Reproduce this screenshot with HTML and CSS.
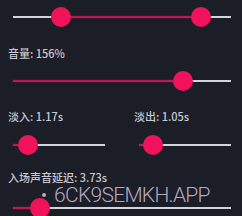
FILE: index.html
```html
<!DOCTYPE html>
<html>
<head>
<meta charset="utf-8">
<link rel="stylesheet" href="styles.css">
</head>
<body>
<div class="panel">
  <div class="slider">
    <div class="track"></div>
    <div class="fill" style="left:22%;width:64.2%"></div>
    <div class="thumb" style="left:22%"></div>
    <div class="thumb" style="left:86.2%"></div>
  </div>

  <div class="group">
    <div class="label">音量: 156%</div>
    <div class="slider">
      <div class="track"></div>
      <div class="fill" style="left:0;width:78%"></div>
      <div class="thumb" style="left:78%"></div>
    </div>
  </div>

  <div class="group cols">
    <div class="col">
      <div class="label">淡入: 1.17s</div>
      <div class="slider">
        <div class="track"></div>
        <div class="fill" style="left:0;width:16%"></div>
        <div class="thumb" style="left:16%"></div>
      </div>
    </div>
    <div class="col">
      <div class="label">淡出: 1.05s</div>
      <div class="slider">
        <div class="track"></div>
        <div class="fill" style="left:0;width:15%"></div>
        <div class="thumb" style="left:15%"></div>
      </div>
    </div>
  </div>

  <div class="group last">
    <div class="label">入场声音延迟: 3.73s</div>
    <div class="slider">
      <div class="track"></div>
      <div class="fill" style="left:0;width:12.3%"></div>
      <div class="thumb" style="left:12.3%"></div>
    </div>
  </div>
</div>
<div class="watermark"><span class="dot"></span>6CK9SEMKH.APP</div>
</body>
</html>
```
FILE: styles.css
```css
html, body {
  margin: 0;
  padding: 0;
  background: #1b1d27;
  width: 242px;
  height: 216px;
  overflow: hidden;
}
.panel {
  padding: 7px 6px 0 8px;
  display: flex;
  flex-direction: column;
}
.group {
  margin-top: 19px;
  display: flex;
  flex-direction: column;
  gap: 11px;
}
.group.cols {
  flex-direction: row;
  gap: 24px;
  margin-top: 18px;
}
.group.last {
  margin-top: 15px;
  gap: 14px;
}
.col {
  flex: 1;
  display: flex;
  flex-direction: column;
  gap: 12px;
}
.label {
  font-family: "Noto Sans CJK SC", "Noto Sans", sans-serif;
  font-size: 11px;
  line-height: 14px;
  color: #c8c8ce;
  font-weight: 500;
}
.slider {
  position: relative;
  height: 20px;
  margin: 0 5px;
}
.track {
  position: absolute;
  left: 0;
  right: 0;
  top: 9px;
  height: 2px;
  background: #d2d2da;
}
.fill {
  position: absolute;
  top: 9px;
  height: 2px;
  background: #bb1a52;
  box-shadow: 0 0 2px rgba(200, 20, 80, 0.6);
}
.thumb {
  position: absolute;
  top: 0;
  width: 20px;
  height: 20px;
  margin-left: -10px;
  border-radius: 50%;
  background: #f1135a;
}
.watermark {
  position: absolute;
  left: 42px;
  top: 187px;
  font-family: "Roboto", sans-serif;
  font-weight: 300;
  font-size: 21px;
  line-height: 16px;
  letter-spacing: -0.7px;
  color: #b8a8c0;
  display: flex;
  align-items: center;
  gap: 8px;
}
.dot {
  width: 4px;
  height: 4px;
  border-radius: 50%;
  background: #b8a8c0;
}
```
